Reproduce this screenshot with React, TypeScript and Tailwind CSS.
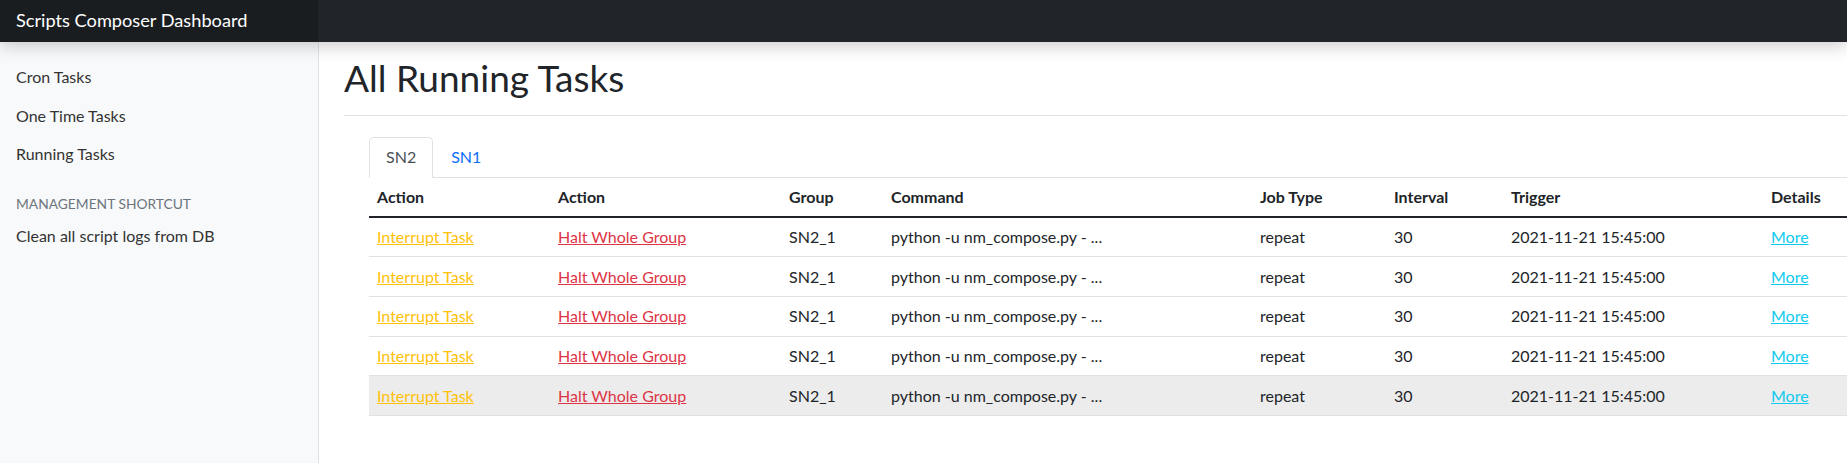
const rows = [
  { group: "SN2_1", command: "python -u nm_compose.py - ...", jobType: "repeat", interval: "30", trigger: "2021-11-21 15:45:00" },
  { group: "SN2_1", command: "python -u nm_compose.py - ...", jobType: "repeat", interval: "30", trigger: "2021-11-21 15:45:00" },
  { group: "SN2_1", command: "python -u nm_compose.py - ...", jobType: "repeat", interval: "30", trigger: "2021-11-21 15:45:00" },
  { group: "SN2_1", command: "python -u nm_compose.py - ...", jobType: "repeat", interval: "30", trigger: "2021-11-21 15:45:00" },
  { group: "SN2_1", command: "python -u nm_compose.py - ...", jobType: "repeat", interval: "30", trigger: "2021-11-21 15:45:00" },
];

const headers = ["Action", "Action", "Group", "Command", "Job Type", "Interval", "Trigger", "Details"];

export default function App() {
  return (
    <div className="h-[463px] w-full overflow-hidden bg-white font-['Lato',sans-serif] text-[#212529]">
      {/* Top navbar */}
      <header className="relative z-10 flex h-[42px] bg-[#212529] shadow-[0_3px_18px_rgba(0,0,0,0.22)]">
        <div className="flex w-[318px] items-center bg-[#1a1d20] px-4 text-[18.2px] text-white">
          Scripts Composer Dashboard
        </div>
      </header>

      <div className="flex h-[421px]">
        {/* Sidebar */}
        <aside className="w-[319px] shrink-0 border-r border-[#dee2e6] bg-[#f8f9fa] pt-[16px]">
          <nav className="flex flex-col">
            <a className="px-4 py-2 text-[16px] leading-[22.5px] text-[#333]">Cron Tasks</a>
            <a className="px-4 py-2 text-[16px] leading-[22.5px] text-[#333]">One Time Tasks</a>
            <a className="px-4 py-2 text-[16px] leading-[22.5px] text-[#333]">Running Tasks</a>
          </nav>
          <h6 className="mt-[21px] mb-1 px-4 text-[13.8px] leading-[18px] uppercase text-[#6c757d]">
            Management Shortcut
          </h6>
          <a className="block px-4 py-2 text-[16px] leading-[22.5px] text-[#333]">Clean all script logs from DB</a>
        </aside>

        {/* Main */}
        <main className="min-w-0 flex-1 pl-[25px] pt-[14px]">
          <h1 className="border-b border-[#dee2e6] pb-[14.5px] text-[37px] leading-[1.2] font-normal">
            All Running Tasks
          </h1>

          <div className="mt-[21px] pl-[25px]">
            {/* Tabs */}
            <div className="flex h-[41px] border-b border-[#dee2e6]">
              <div className="-mb-px flex h-[41px] items-center rounded-t-[5px] border border-[#dee2e6] border-b-white bg-white px-[16px] text-[16px] text-[#495057]">
                SN2
              </div>
              <div className="-mb-px flex h-[41px] items-center border border-transparent px-[17px] text-[16px] text-[#0d6efd]">
                SN1
              </div>
            </div>

            {/* Table */}
            <div className="text-[16px]">
              <div className="grid h-[40px] grid-cols-[181px_231px_102px_369px_134px_117px_260px_1fr] items-center border-b-2 border-[#212529] font-bold">
                {headers.map((h, i) => (
                  <div key={i} className="px-2 whitespace-nowrap">{h}</div>
                ))}
              </div>
              {rows.map((r, i) => (
                <div
                  key={i}
                  className={`grid h-[39.6px] grid-cols-[181px_231px_102px_369px_134px_117px_260px_1fr] items-center border-b border-[#dee2e6] ${
                    i === rows.length - 1 ? "bg-[#ececec]" : ""
                  }`}
                >
                  <div className="px-2 whitespace-nowrap">
                    <a className="text-[#ffc107] underline">Interrupt Task</a>
                  </div>
                  <div className="px-2 whitespace-nowrap">
                    <a className="text-[#dc3545] underline">Halt Whole Group</a>
                  </div>
                  <div className="px-2 whitespace-nowrap">{r.group}</div>
                  <div className="px-2 whitespace-nowrap">{r.command}</div>
                  <div className="px-2 whitespace-nowrap">{r.jobType}</div>
                  <div className="px-2 whitespace-nowrap">{r.interval}</div>
                  <div className="px-2 whitespace-nowrap">{r.trigger}</div>
                  <div className="px-2 whitespace-nowrap">
                    <a className="text-[#0dcaf0] underline">More</a>
                  </div>
                </div>
              ))}
            </div>
          </div>
        </main>
      </div>
    </div>
  );
}
